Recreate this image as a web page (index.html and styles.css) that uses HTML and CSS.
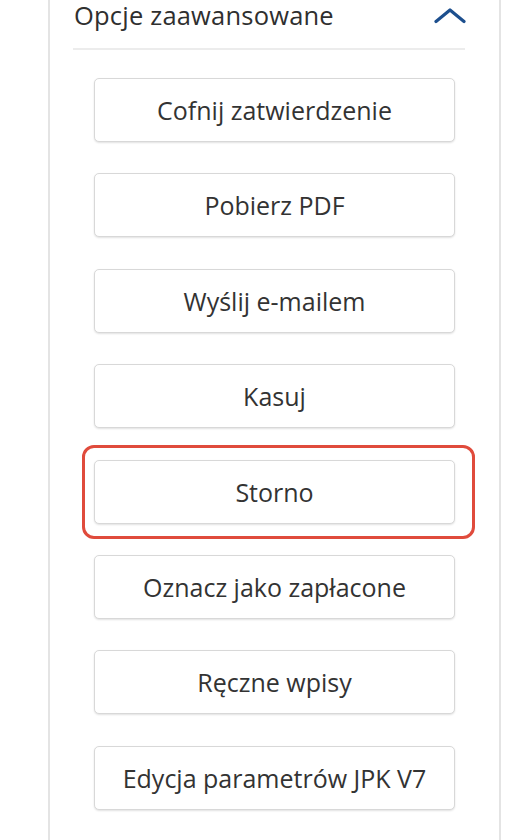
FILE: index.html
```html
<!DOCTYPE html>
<html lang="pl">
<head>
<meta charset="utf-8">
<link rel="stylesheet" href="styles.css">
</head>
<body>
<div class="panel">
  <div class="header">
    <span class="title">Opcje zaawansowane</span>
    <svg class="chevron" width="32" height="18" viewBox="0 0 32 18"><polyline points="2,15.5 16,4 30,15.5" fill="none" stroke="#1d4f8e" stroke-width="3.2" stroke-linecap="round" stroke-linejoin="round"/></svg>
  </div>
  <div class="divider"></div>
  <div class="buttons">
    <button class="btn">Cofnij zatwierdzenie</button>
    <button class="btn">Pobierz PDF</button>
    <button class="btn">Wyślij e-mailem</button>
    <button class="btn">Kasuj</button>
    <button class="btn">Storno</button>
    <button class="btn">Oznacz jako zapłacone</button>
    <button class="btn">Ręczne wpisy</button>
    <button class="btn">Edycja parametrów JPK V7</button>
  </div>
  <div class="highlight"></div>
</div>
</body>
</html>
```
FILE: styles.css
```css
html, body {
  margin: 0;
  padding: 0;
  background: #ffffff;
}
body {
  font-family: "Open Sans", "Noto Sans", sans-serif;
  color: #333333;
  height: 840px;
  overflow: hidden;
}
.panel {
  position: relative;
  margin-left: 48px;
  width: 449px;
  height: 840px;
  border-left: 2px solid #e4e4e4;
  border-right: 2px solid #e4e4e4;
}
.header {
  height: 48px;
  display: flex;
  justify-content: space-between;
  align-items: flex-start;
  padding-left: 24px;
  padding-right: 33px;
}
.title {
  font-size: 25.5px;
  line-height: 31px;
  color: #2f2f2f;
  letter-spacing: 0.2px;
}
.chevron {
  margin-top: 6px;
}
.divider {
  margin-left: 23px;
  width: 392px;
  height: 2px;
  background: #ececec;
}
.buttons {
  margin-top: 28px;
  margin-left: 44px;
  width: 361px;
  display: flex;
  flex-direction: column;
  gap: 31.4px;
}
.btn {
  height: 64px;
  display: flex;
  align-items: center;
  justify-content: center;
  background: #ffffff;
  border: 1.5px solid #d8d8d8;
  border-radius: 5px;
  box-shadow: 0 1px 2px rgba(0, 0, 0, 0.12);
  font-family: "Open Sans", "Noto Sans", sans-serif;
  font-size: 25px;
  font-weight: 500;
  color: #333333;
  padding: 0;
}
.highlight {
  position: absolute;
  left: 32px;
  top: 445px;
  width: 387px;
  height: 88px;
  border: 3px solid #e04b3c;
  border-radius: 12px;
}
```
